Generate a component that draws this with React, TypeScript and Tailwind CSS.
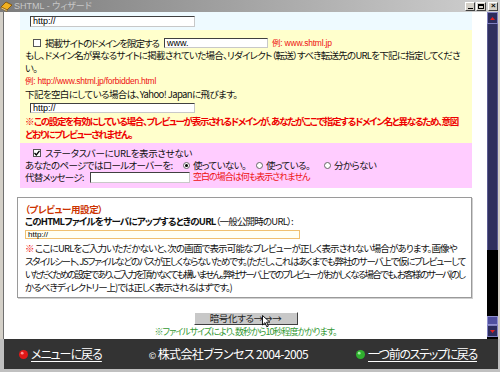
import type { ReactNode } from 'react';

const Field = ({ className, children }: { className: string; children?: ReactNode }) => (
  <div
    className={`flex items-center border border-t-[#404040] border-l-[#404040] border-r-[#c8c8c8] border-b-[#c8c8c8] bg-white pl-[2px] font-['Liberation_Sans',sans-serif] text-[9px] leading-none tracking-normal text-black ${className}`}
  >
    {children}
  </div>
);

const Radio = ({ on }: { on?: boolean }) => (
  <span className="mx-[3px] inline-flex h-[7px] w-[7px] shrink-0 items-center justify-center rounded-full border border-[#666] bg-white align-middle">
    {on && <span className="h-[3px] w-[3px] rounded-full bg-black" />}
  </span>
);

const Gem = ({ color, light }: { color: string; light: string }) => (
  <svg width="11" height="11" viewBox="0 0 11 11">
    <circle cx="5.5" cy="5.5" r="4.5" fill={color} />
    <path d="M5.5 0.5 L6.3 4.7 L10.5 5.5 L6.3 6.3 L5.5 10.5 L4.7 6.3 L0.5 5.5 L4.7 4.7 Z" fill={color} />
    <circle cx="4.2" cy="4.2" r="1.4" fill={light} />
  </svg>
);

const TitleBar = () => (
  <div className="flex h-[12px] items-center bg-linear-to-r from-[#7c7c7c] to-[#d0d0d0]">
    <svg width="13" height="12" viewBox="0 0 13 12" className="shrink-0">
      <path d="M1 7 L6 2 L12 5 L7 10 Z" fill="#f0b020" stroke="#7a4a00" strokeWidth="0.8" />
      <path d="M1 7 L7 10 L7 11.5 L1 8.5 Z" fill="#fff4c0" stroke="#7a4a00" strokeWidth="0.6" />
    </svg>
    <span className="ml-[1px] font-['Liberation_Sans','Noto_Sans_CJK_JP',sans-serif] text-[9px] leading-none tracking-normal text-[#c8c8c8]">
      SHTML - ウィザード
    </span>
    <div className="ml-auto mr-[2px] flex gap-[1px]">
      <div className="flex h-[9px] w-[10px] items-end justify-center border border-t-white border-l-white border-r-[#404040] border-b-[#404040] bg-[#d4d0c8] pb-[1px]">
        <div className="h-[1px] w-[5px] bg-black" />
      </div>
      <div className="flex h-[9px] w-[10px] items-center justify-center border border-t-white border-l-white border-r-[#404040] border-b-[#404040] bg-[#d4d0c8]">
        <div className="h-[5px] w-[6px] border border-t-2 border-black" />
      </div>
      <div className="ml-[1px] flex h-[9px] w-[10px] items-center justify-center border border-t-white border-l-white border-r-[#404040] border-b-[#404040] bg-[#d4d0c8] font-['Liberation_Sans',sans-serif] text-[8px] font-bold leading-none text-black">
        ×
      </div>
    </div>
  </div>
);

const ScrollBar = () => (
  <div className="flex w-[11px] flex-col bg-black">
    <div className="flex h-[12px] items-center justify-center border border-[#8080c0] bg-[#2c2c5c]">
      <svg width="5" height="3" viewBox="0 0 5 3"><path d="M0 3 L2.5 0 L5 3 Z" fill="#e02020" /></svg>
    </div>
    <div className="h-[226px] border-x border-[#5a5a90] bg-[#30305e]" />
    <div className="h-[66px] bg-black" />
    <div className="h-[9px] border border-[#9090d0] bg-[#5050a0]" />
    <div className="flex h-[12px] items-center justify-center border border-[#8080c0] bg-[#2c2c5c]">
      <svg width="5" height="3" viewBox="0 0 5 3"><path d="M0 0 L2.5 3 L5 0 Z" fill="#e02020" /></svg>
    </div>
  </div>
);

const Footer = () => (
  <div className="mr-[2px] ml-[4px] flex h-[30px] items-center justify-between bg-[#333333] pl-[14px] pr-[21px] text-[12px] leading-none text-white">
    <div className="flex items-center gap-[2px]">
      <Gem color="#e01818" light="#ff9090" />
      <span className="tracking-[-1px] underline underline-offset-2">メニューに戻る</span>
    </div>
    <span className="tracking-[-0.6px]">
      <span className="text-[9px]">©</span> 株式会社ブランセス 2004-2005
    </span>
    <div className="flex items-center gap-[2px]">
      <Gem color="#30b030" light="#a0f0a0" />
      <span className="tracking-[-1.3px] underline underline-offset-2">一つ前のステップに戻る</span>
    </div>
  </div>
);

export default function App() {
  return (
    <div className="relative flex h-[372px] w-[500px] flex-col overflow-hidden bg-[#c0c0c0] font-['Noto_Sans_CJK_JP',sans-serif] text-[9.5px] leading-[13px] tracking-[-0.6px] text-[#111] [font-feature-settings:'palt'_1]">
      <TitleBar />
      <div className="flex h-[327px]">
        <div className="w-[4px] border-r border-[#707070] bg-[#d4d0c8]" />
        <div className="flex-1 overflow-hidden bg-white">
          <div className="ml-[16px] h-[18px] w-[452px] bg-[#eefaff] pt-[4px] pl-[10px]">
            <Field className="h-[11px] w-[165px]">http://</Field>
          </div>

          <div className="ml-[16px] h-[113px] w-[452px] bg-[#ffffcc] pl-[5px] pt-[7px]">
            <div className="flex h-[12px] items-center">
              <span className="ml-[8px] h-[8px] w-[8px] shrink-0 border border-[#555] bg-white" />
              <span className="ml-[4px] w-[119px] shrink-0 whitespace-nowrap tracking-[-1.1px]">掲載サイトのドメインを限定する</span>
              <Field className="h-[10px] w-[104px] shrink-0">www.</Field>
              <span className="ml-[4px] whitespace-nowrap font-['Liberation_Sans','Noto_Sans_CJK_JP',sans-serif] text-[8.5px] tracking-[-0.2px] text-[#ee1111]">例: www.shtml.jp</span>
            </div>
            <div className="whitespace-nowrap tracking-[-0.75px]">
              もし、ドメイン名が異なるサイトに掲載されていた場合、リダイレクト（転送）すべき転送先のURLを下記に指定してくださ
              <br />
              い。
            </div>
            <div className="whitespace-nowrap font-['Liberation_Sans','Noto_Sans_CJK_JP',sans-serif] text-[8.5px] tracking-[-0.25px] text-[#ee1111]">例: http://www.shtml.jp/forbidden.html</div>
            <div className="whitespace-nowrap tracking-[-0.6px]">下記を空白にしている場合は、Yahoo! Japanに飛びます。</div>
            <Field className="mt-[2px] ml-[5px] h-[10px] w-[165px]">http://</Field>
            <div className="mt-[2px] whitespace-nowrap font-bold tracking-[-1.3px] text-[#ee0000]">
              ※ この設定を有効にしている場合、プレビューが表示されるドメインが、あなたがここで指定するドメイン名と異なるため、意図
              <br />
              どおりにプレビューされません。
            </div>
          </div>

          <div className="ml-[16px] h-[45px] w-[452px] bg-[#ffccff] pl-[5px] pt-[4px] leading-[12px]">
            <div className="flex h-[12px] items-center">
              <span className="ml-[8px] flex h-[8px] w-[8px] items-center justify-center border border-[#555] bg-white">
                <svg width="6" height="6" viewBox="0 0 6 6"><path d="M0.5 3 L2.3 5 L5.5 0.8" fill="none" stroke="#000" strokeWidth="1.3" /></svg>
              </span>
              <span className="ml-[4px] whitespace-nowrap tracking-[-0.3px]">ステータスバーにURLを表示させない</span>
            </div>
            <div className="flex h-[12px] items-center whitespace-nowrap">
              <span className="w-[155px] shrink-0">あなたのページではロールオーバーを:</span>
              <Radio on />
              <span className="w-[60px] shrink-0">使っていない。</span>
              <Radio />
              <span className="w-[55px] shrink-0">使っている。</span>
              <Radio />
              <span>分からない</span>
            </div>
            <div className="flex h-[12px] items-center whitespace-nowrap">
              <span className="w-[65px] shrink-0 tracking-[-0.8px]">代替メッセージ:</span>
              <Field className="h-[11px] w-[100px] shrink-0" />
              <span className="ml-[3px] text-[9px] tracking-[-1px] text-[#ee1111]">空白の場合は何も表示されません</span>
            </div>
          </div>

          <div className="mt-[9px] ml-[13px] h-[101px] w-[455px] border border-[#9a9a9a] pl-[7px] pt-[5px] shadow-[1px_1px_0_#d0d0d0]">
            <div className="font-bold leading-[12px] tracking-[-0.4px] text-[#cc3300]">（プレビュー用設定）</div>
            <div className="whitespace-nowrap leading-[12px] tracking-[-0.8px]">
              <span className="font-bold">このHTMLファイルをサーバにアップするときのURL</span>（一般公開時のURL）:
            </div>
            <div className="mt-[3px] flex h-[9px] w-[275px] items-center border border-[#f0c070] bg-[#fffff4] pl-[2px] font-['Liberation_Sans',sans-serif] text-[8px] leading-none tracking-normal text-black">
              http://
            </div>
            <div className="mt-[3px] whitespace-nowrap">
              <div className="tracking-[-0.85px]">
                <span className="text-[#ee1111]">※</span> ここにURLをご入力いただかないと、次の画面で表示可能なプレビューが正しく表示されない場合があります。画像や
              </div>
              <div className="tracking-[-1.25px]">
                スタイルシート、JSファイルなどのパスが正しくならないためです。(ただし、これはあくまでも弊社のサーバ上で仮にプレビューして
              </div>
              <div className="tracking-[-1.75px]">
                いただくための設定であり、ご入力を頂かなくても構いません。弊社サーバ上でのプレビューがおかしくなる場合でも、お客様のサーバ(のし
              </div>
              <div className="tracking-[-1px]">かるべきディレクトリー上)では正しく表示されるはずです。)</div>
            </div>
          </div>

          <div className="relative mx-auto mt-[14px] flex h-[13px] w-[104px] items-center justify-center border border-t-white border-l-white border-r-[#404040] border-b-[#404040] bg-[#c8c8c8] text-[9.5px] leading-none tracking-[-0.3px] text-[#222]">
            暗号化する→→→
            <svg width="9" height="13" viewBox="0 0 9 13" className="absolute left-[67px] top-[2px]">
              <path d="M0.5 0.5 L0.5 10 L3 7.6 L4.8 11.8 L6.3 11.1 L4.6 7.1 L7.8 7.1 Z" fill="#fff" stroke="#000" strokeWidth="0.9" />
            </svg>
          </div>
          <div className="mt-[2px] text-center text-[9px] leading-[10px] tracking-[-1px] text-[#339933]">
            ※ファイルサイズにより、数秒から10秒程度かかります。
          </div>
        </div>
        <ScrollBar />
        <div className="w-[2px] bg-[#d4d0c8]" />
      </div>
      <Footer />
    </div>
  );
}
